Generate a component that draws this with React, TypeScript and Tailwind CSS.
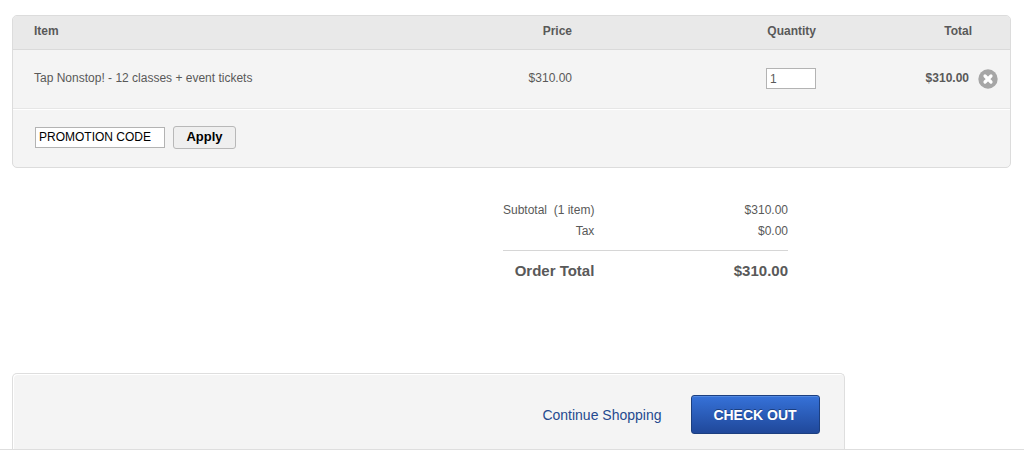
import { useState } from "react";

interface CartItem {
  name: string;
  price: string;
  quantity: string;
  total: string;
}

const items: CartItem[] = [
  {
    name: "Tap Nonstop! - 12 classes + event tickets",
    price: "$310.00",
    quantity: "1",
    total: "$310.00",
  },
];

const RemoveIcon = () => (
  <svg viewBox="0 0 20 20" className="h-5 w-5" aria-hidden="true">
    <circle cx="10" cy="10" r="9.7" fill="#a6a6a6" />
    <path
      d="M7 7 13 13M13 7 7 13"
      stroke="#fff"
      strokeWidth="3.2"
      strokeLinecap="round"
    />
  </svg>
);

const CartRow = ({ item }: { item: CartItem }) => {
  const [quantity, setQuantity] = useState(item.quantity);

  return (
    <tr className="h-[59px] border-b border-[#e6e6e6]">
      <td className="pb-[2px] pl-[21px]">{item.name}</td>
      <td className="pb-[2px] text-right">{item.price}</td>
      <td className="text-right">
        <input
          type="text"
          aria-label={`Quantity of ${item.name}`}
          value={quantity}
          onChange={(e) => setQuantity(e.target.value)}
          className="inline-block h-[21px] w-[50px] border border-[#b3b3b3] bg-white px-[3px] align-middle text-xs"
        />
      </td>
      <td>
        <div className="flex items-center justify-end gap-[9px] pr-3">
          <span className="pb-[2px] font-bold">{item.total}</span>
          <button type="button" aria-label={`Remove ${item.name}`}>
            <RemoveIcon />
          </button>
        </div>
      </td>
    </tr>
  );
};

const CartTable = () => {
  const [code, setCode] = useState("PROMOTION CODE");

  return (
    <div className="overflow-hidden rounded-[5px] border border-[#dcdcdc] bg-[#f4f4f4]">
      <table className="w-full table-fixed border-collapse">
        <thead>
          <tr className="h-[33px] border-b border-[#dadada] bg-[#e9e9e9]">
            <th className="pb-[3px] pl-[21px] text-left">Item</th>
            <th className="w-[160px] pb-[3px] text-right">Price</th>
            <th className="w-[244px] pb-[3px] text-right">Quantity</th>
            <th className="w-[194px] pr-[38px] pb-[3px] text-right">Total</th>
          </tr>
        </thead>
        <tbody>
          {items.map((item) => (
            <CartRow key={item.name} item={item} />
          ))}
        </tbody>
      </table>
      <form
        className="flex items-center gap-2 border-t border-white px-[22px] pt-4 pb-[18px] text-black"
        onSubmit={(e) => e.preventDefault()}
      >
        <input
          type="text"
          aria-label="Promotion code"
          value={code}
          onChange={(e) => setCode(e.target.value)}
          className="h-[21px] w-[130px] border border-[#b3b3b3] bg-white px-[3px] text-xs"
        />
        <button
          type="submit"
          className="h-[23px] w-[63px] rounded-[3px] border border-[#b8b8b8] bg-[#efefef] text-[13px] leading-5 font-bold"
        >
          Apply
        </button>
      </form>
    </div>
  );
};

const Totals = () => (
  <table className="mt-8 mr-[223px] ml-auto w-[285px] text-right">
    <tbody>
      <tr className="h-[21px]">
        <th className="w-[91px] font-normal whitespace-pre">Subtotal  (1 item)</th>
        <td>$310.00</td>
      </tr>
      <tr className="h-[21px]">
        <th className="font-normal">Tax</th>
        <td>$0.00</td>
      </tr>
    </tbody>
    <tbody className="before:block before:h-2">
      <tr className="h-[42px] border-t border-[#d6d6d6] text-[15px] font-bold">
        <th>Order Total</th>
        <td>$310.00</td>
      </tr>
    </tbody>
  </table>
);

export default function App() {
  return (
    <main className="bg-white pt-[15px] font-['Liberation_Sans',Arial,sans-serif] text-xs text-[#595959]">
      <div className="pr-[13px] pl-3">
        <CartTable />
        <Totals />
        <div className="mt-[81px] flex w-5/6 items-center justify-end gap-[29px] rounded-t-[5px] border border-b-0 border-[#dedede] bg-[#f4f4f4] pt-[21px] pr-6 pb-[15px] shadow-[inset_1px_1px_0_#fff]">
          <a href="#" className="text-sm text-[#254a8f]">
            Continue Shopping
          </a>
          <button
            type="button"
            className="h-[39px] w-[129px] rounded-[3px] border border-[#1c3f80] bg-linear-to-b from-[#3672d9] to-[#20489a] text-sm font-bold text-white shadow-[inset_0_1px_0_#5288df] text-shadow-[0_-1px_0_#1b3f80]"
          >
            CHECK OUT
          </button>
        </div>
      </div>
      <div className="h-[3px] border-t border-[#dedede]" />
    </main>
  );
}
